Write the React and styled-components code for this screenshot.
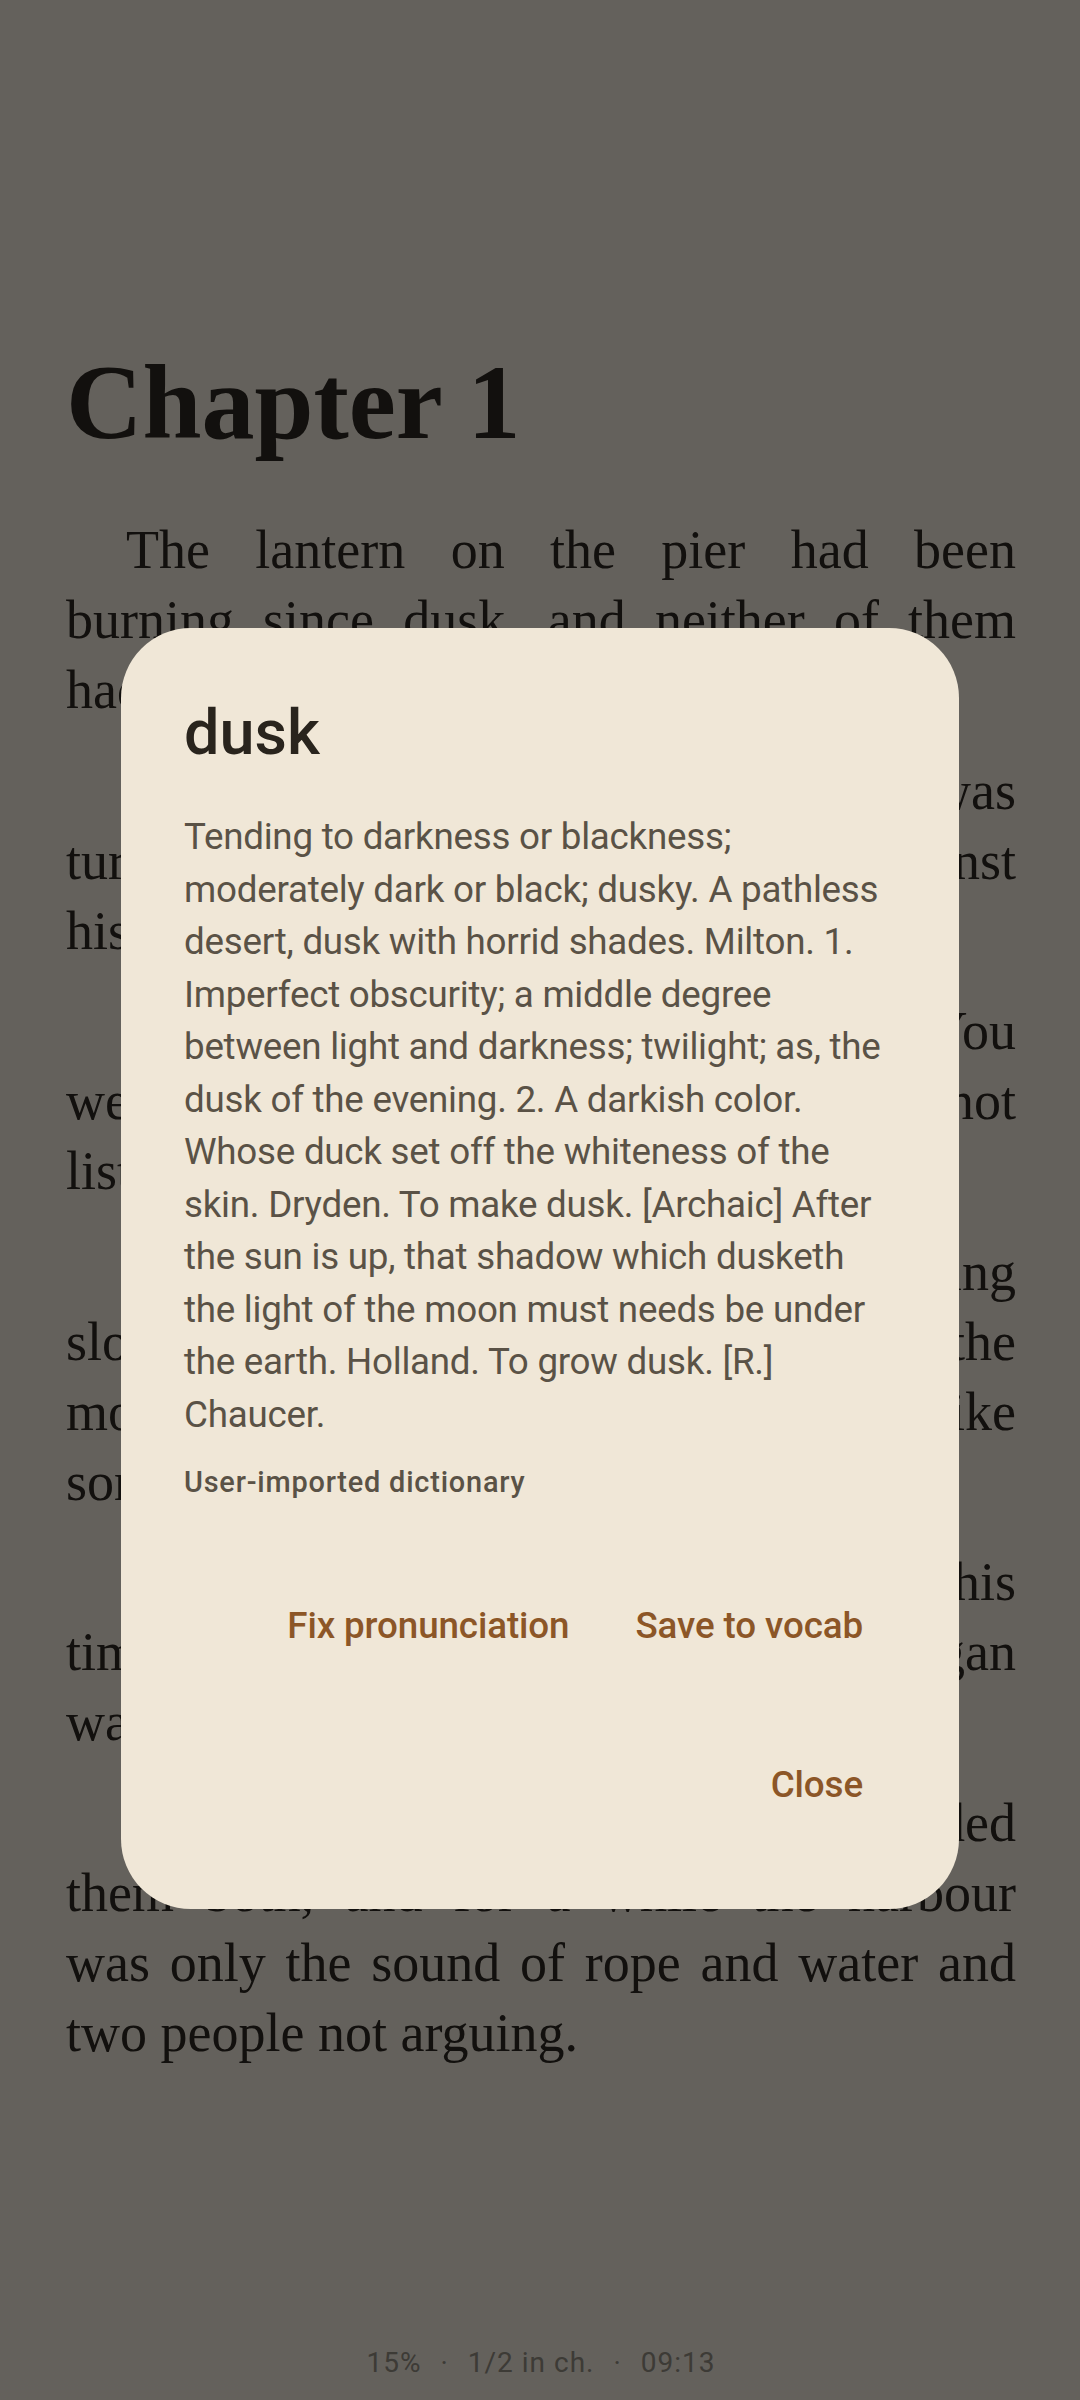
import React from 'react'
import styled, { createGlobalStyle } from 'styled-components'

const GlobalStyle = createGlobalStyle`
    html, body {
        margin: 0;
        padding: 0;
        background: #faf2e6;
    }
    * {
        box-sizing: border-box;
    }
`

const Page = styled.div`
    min-height: 2400px;
    display: flex;
    flex-direction: column;
    padding: 340px 64px 0 66px;
    background: #faf2e6;
    color: #2f2a23;
    font-family: "Liberation Serif", "Times New Roman", serif;
`

const ChapterTitle = styled.h1`
    margin: 0 0 49px;
    font-size: 106px;
    line-height: 126px;
    font-weight: 700;
`

const Paragraph = styled.p`
    margin: 0 0 30.6px;
    font-size: 54px;
    line-height: 70px;
    text-align: justify;
`

const Line = styled.span`
    display: block;
    white-space: nowrap;
    padding-left: ${props => props.$indent ? '60px' : '0'};
    text-align-last: ${props => props.$last ? 'left' : 'justify'};
`

const StatusBar = styled.div`
    margin-top: auto;
    padding-bottom: 19px;
    display: flex;
    justify-content: center;
    gap: 19px;
    font-family: Roboto, "Liberation Sans", sans-serif;
    font-size: 28px;
    line-height: 36px;
    letter-spacing: 1px;
    color: #989388;
`

const Scrim = styled.div`
    position: fixed;
    inset: 0;
    background: rgba(0, 0, 0, 0.6);
    display: flex;
    justify-content: center;
    align-items: flex-start;
    padding-top: 628px;
`

const Dialog = styled.div`
    width: 838px;
    background: #f0e7d7;
    border-radius: 70px;
    padding: 63px 63px 71px;
    font-family: Roboto, "Liberation Sans", sans-serif;
`

const Word = styled.h2`
    margin: 0;
    font-size: 63px;
    line-height: 84px;
    font-weight: 500;
    color: #29241d;
`

const Definition = styled.p`
    margin: 36px 0 0;
    font-size: 36.75px;
    line-height: 52.5px;
    letter-spacing: -0.25px;
    color: #5a5246;
`

const Source = styled.div`
    margin-top: 20px;
    font-size: 28.9px;
    line-height: 42px;
    font-weight: 500;
    letter-spacing: 0.8px;
    color: #5a5246;
`

const ActionRow = styled.div`
    display: flex;
    justify-content: flex-end;
    margin-top: ${props => props.$top}px;
`

const TextButton = styled.button`
    height: 105px;
    padding: 0 33px;
    border: none;
    background: transparent;
    font-family: Roboto, "Liberation Sans", sans-serif;
    font-size: 36.75px;
    line-height: 52.5px;
    font-weight: 500;
    letter-spacing: -0.1px;
    color: #8c5627;
    cursor: pointer;
`

const paragraphs = [
    [
        'The lantern on the pier had been',
        'burning since dusk, and neither of them',
        'had said a word about the tide.',
    ],
    [
        'Mara watched the water while he was',
        'turning the brass key over and against',
        'his palm, slow and thoughtful.',
    ],
    [
        '\u201CIt will turn soon,\u201D she said. \u201CYou',
        'were right about that, even if I did not',
        'listen to you at the time.\u201D',
    ],
    [
        'He laughed, and the sound went rolling',
        'slowly over the boards toward the',
        'moored boats, soft and low, almost like',
        'something half remembered.',
    ],
    [
        'Neither of them wanted to leave this',
        'time, even as the cold rain slowly began',
        'walking in from the sea.',
    ],
    [
        'In the end it was the rain that decided',
        'them both, and for a while the harbour',
        'was only the sound of rope and water and',
        'two people not arguing.',
    ],
]

const definition = 'Tending to darkness or blackness; moderately dark or black; dusky. A pathless desert, dusk with horrid shades. Milton. 1. Imperfect obscurity; a middle degree between light and darkness; twilight; as, the dusk of the evening. 2. A darkish color. Whose duck set off the whiteness of the skin. Dryden. To make dusk. [Archaic] After the sun is up, that shadow which dusketh the light of the moon must needs be under the earth. Holland. To grow dusk. [R.] Chaucer.'

export default function App() {
    return (
        <>
            <GlobalStyle />
            <Page>
                <ChapterTitle>Chapter 1</ChapterTitle>
                {paragraphs.map((lines, i) => (
                    <Paragraph key={i}>
                        {lines.map((line, j) => (
                            <Line key={j} $indent={j === 0} $last={j === lines.length - 1}>
                                {line}
                            </Line>
                        ))}
                    </Paragraph>
                ))}
                <StatusBar>
                    <span>15%</span>
                    <span>·</span>
                    <span>1/2 in ch.</span>
                    <span>·</span>
                    <span>09:13</span>
                </StatusBar>
            </Page>
            <Scrim>
                <Dialog>
                    <Word>dusk</Word>
                    <Definition>{definition}</Definition>
                    <Source>User-imported dictionary</Source>
                    <ActionRow $top={70.5}>
                        <TextButton>Fix pronunciation</TextButton>
                        <TextButton>Save to vocab</TextButton>
                    </ActionRow>
                    <ActionRow $top={54}>
                        <TextButton>Close</TextButton>
                    </ActionRow>
                </Dialog>
            </Scrim>
        </>
    )
}
